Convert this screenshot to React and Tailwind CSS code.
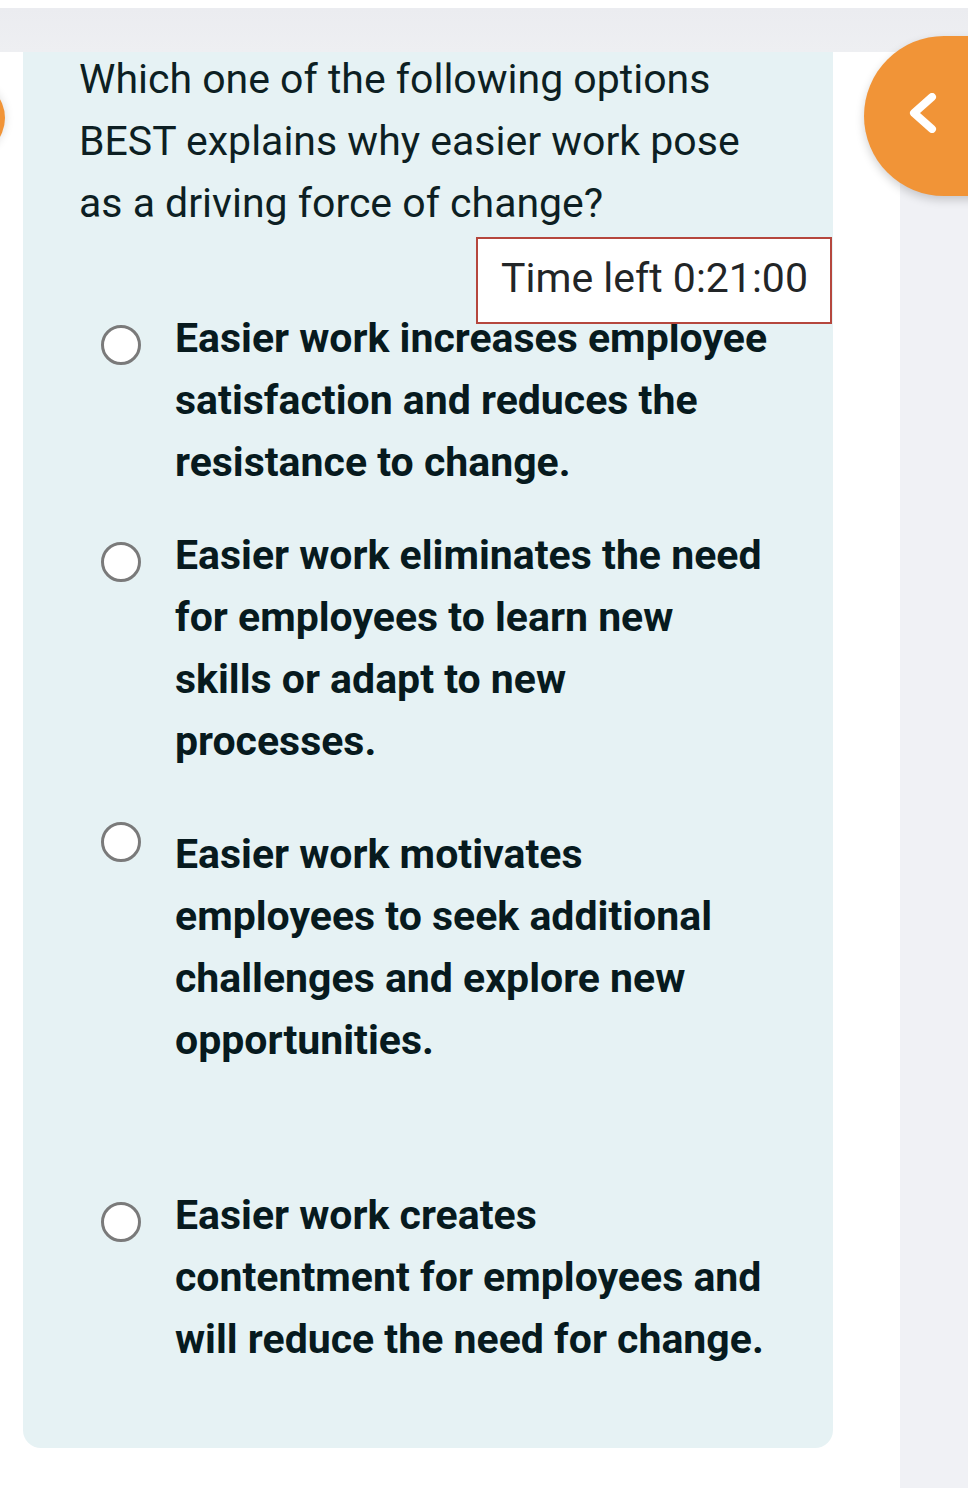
import React from "react";

const options = [
  { lines: ["Easier work increases employee", "satisfaction and reduces the", "resistance to change."], mt: "mt-[-17px]", textPt: "pt-0" },
  { lines: ["Easier work eliminates the need", "for employees to learn new", "skills or adapt to new", "processes."], mt: "mt-[31px]", textPt: "pt-0" },
  { lines: ["Easier work motivates", "employees to seek additional", "challenges and explore new", "opportunities."], mt: "mt-[32px]", textPt: "pt-[19px]" },
  { lines: ["Easier work creates", "contentment for employees and", "will reduce the need for change."], mt: "mt-[113px]", textPt: "pt-0" },
];

export default function App() {
  return (
    <div className="relative min-h-[1488px] bg-white overflow-hidden" style={{ fontFamily: "Roboto, 'Noto Sans', sans-serif" }}>
      <div className="h-2 bg-white" />
      <div className="h-[44px] bg-gradient-to-b from-[#ebecf0] to-[#eeeff2]" />
      <div className="flex">
        <div className="ml-[23px] w-[810px] bg-[#e6f2f4] rounded-b-[18px] pb-[78px] self-start">
          <div className="-mt-1 pl-[56px] text-[41px] leading-[62px] text-[#0d1f23]">
            <div>Which one of the following options</div>
            <div>BEST explains why easier work pose</div>
            <div>as a driving force of change?</div>
          </div>
          <div className="flex justify-end pr-px mt-[3px]">
            <div className="relative z-10 w-[356px] h-[87px] border-2 border-[#b5473d] bg-white flex items-center pl-[23px] pb-[3px] text-[41px] text-[#222527]">
              Time left 0:21:00
            </div>
          </div>
          {options.map((o, i) => (
            <div key={i} className={`flex items-start ${o.mt}`}>
              <div className="ml-[78px] mt-[18px] w-10 h-10 shrink-0 rounded-full border-[3px] border-[#7a7a7a] bg-white" />
              <div className={`ml-[34px] text-[41px] leading-[62px] font-bold text-[#071a1e] ${o.textPt}`}>
                {o.lines.map((l, j) => (
                  <div key={j}>{l}</div>
                ))}
              </div>
            </div>
          ))}
        </div>
        <div className="w-[67px]" />
        <div className="flex-1 bg-[#f0f1f5] min-h-[1436px]" />
      </div>
      <div className="absolute left-[864px] top-[36px] w-[200px] h-[160px] rounded-l-full bg-[#f19437] shadow-[0_4px_10px_rgba(0,0,0,0.18)]">
        <svg className="absolute left-[41px] top-[57px]" width="40" height="40" viewBox="0 0 40 40" fill="none">
          <path d="M27 4 L9 20 L27 36" stroke="white" strokeWidth="8" strokeLinecap="round" strokeLinejoin="round" />
        </svg>
      </div>
      <div className="absolute left-[-75px] top-[80px] w-[80px] h-[76px] rounded-full bg-[#f19437] shadow-[0_0_10px_rgba(0,0,0,0.15)]" />
    </div>
  );
}
